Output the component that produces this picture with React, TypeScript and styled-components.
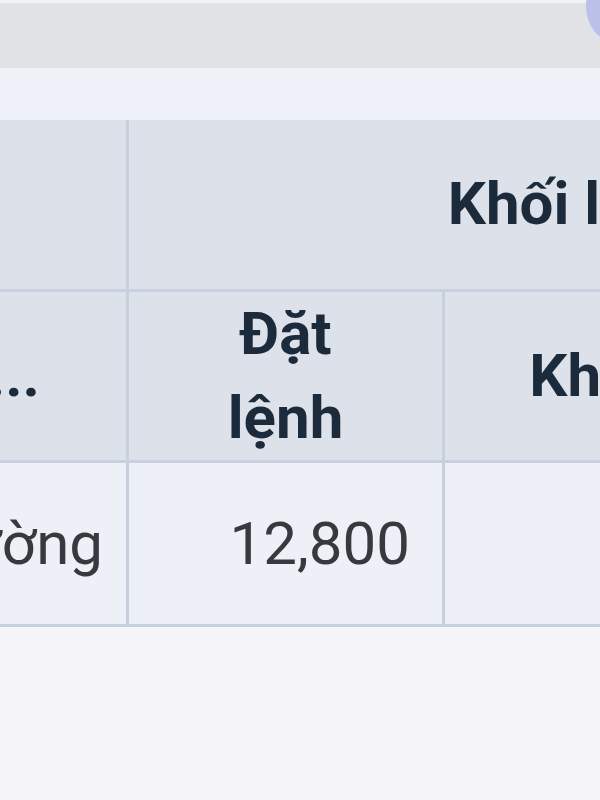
import styled, { createGlobalStyle } from 'styled-components';
import { useLayoutEffect, useRef } from 'react';

const GlobalStyle = createGlobalStyle`
  html, body {
    margin: 0;
    padding: 0;
    background: #f5f5f7;
    font-family: Roboto, "Noto Sans", sans-serif;
  }
`;

const Page = styled.div`
  position: relative;
  width: 600px;
  min-height: 800px;
  background: #f5f5f7;
  overflow: hidden;
`;

const TopBar = styled.div`
  height: 65px;
  border-top: 3px solid #f2f2f4;
  background: #e1e2e6;
`;

const CornerButton = styled.div`
  position: absolute;
  top: -30px;
  right: -44px;
  width: 58px;
  height: 72px;
  border-radius: 50%;
  background: #bcc1ea;
`;

const SubBar = styled.div`
  height: 52px;
  background: linear-gradient(#f0f1f8, #eef1f9);
`;

const Scroller = styled.div`
  overflow-x: auto;
  scrollbar-width: none;
  &::-webkit-scrollbar {
    display: none;
  }
`;

const Table = styled.table`
  border-collapse: collapse;
  table-layout: fixed;
  font-size: 60px;
`;

const HeadRow = styled.tr<{ $h: number }>`
  height: ${({ $h }) => $h}px;
  background: #dce1ea;
`;

const BodyRow = styled.tr`
  height: 164px;
  background: #eef0f8;
`;

const Th = styled.th<{ $align?: 'left' | 'center' | 'right'; $padRight?: number }>`
  border: 3px solid #c6d0df;
  border-top: none;
  padding: 0 ${({ $padRight }) => $padRight ?? 20}px 0 20px;
  color: #1c2b3b;
  font-weight: 700;
  line-height: 1.4;
  text-align: ${({ $align }) => $align ?? 'center'};
  white-space: nowrap;
  vertical-align: middle;
`;

const Td = styled.td<{ $padRight?: number }>`
  border: 3px solid #c6d0df;
  padding: 0 ${({ $padRight }) => $padRight ?? 30}px 0 20px;
  color: #363a3e;
  font-weight: 400;
  text-align: right;
  white-space: nowrap;
  vertical-align: middle;
`;

const Wrap = styled.span`
  display: inline-block;
  white-space: normal;
  width: 3.4em;
`;

const columns = [500, 316, 312, 304];

export default function App() {
  const scrollRef = useRef<HTMLDivElement>(null);

  useLayoutEffect(() => {
    if (scrollRef.current) scrollRef.current.scrollLeft = 374;
  }, []);

  return (
    <Page>
      <GlobalStyle />
      <TopBar />
      <CornerButton />
      <SubBar />
      <Scroller ref={scrollRef}>
        <Table style={{ width: columns.reduce((a, b) => a + b, 0) }}>
          <colgroup>
            {columns.map((w, i) => (
              <col key={i} style={{ width: w }} />
            ))}
          </colgroup>
          <thead>
            <HeadRow $h={170}>
              <Th />
              <Th colSpan={3}>Khối lượng</Th>
            </HeadRow>
            <HeadRow $h={170}>
              <Th $align="right" $padRight={86}>Loại lệnh...</Th>
              <Th>
                <Wrap>Đặt lệnh</Wrap>
              </Th>
              <Th>Khớp</Th>
              <Th>Còn lại</Th>
            </HeadRow>
          </thead>
          <tbody>
            <BodyRow>
              <Td $padRight={23}>Thường</Td>
              <Td $padRight={32}>12,800</Td>
              <Td />
              <Td>12,800</Td>
            </BodyRow>
          </tbody>
        </Table>
      </Scroller>
    </Page>
  );
}
